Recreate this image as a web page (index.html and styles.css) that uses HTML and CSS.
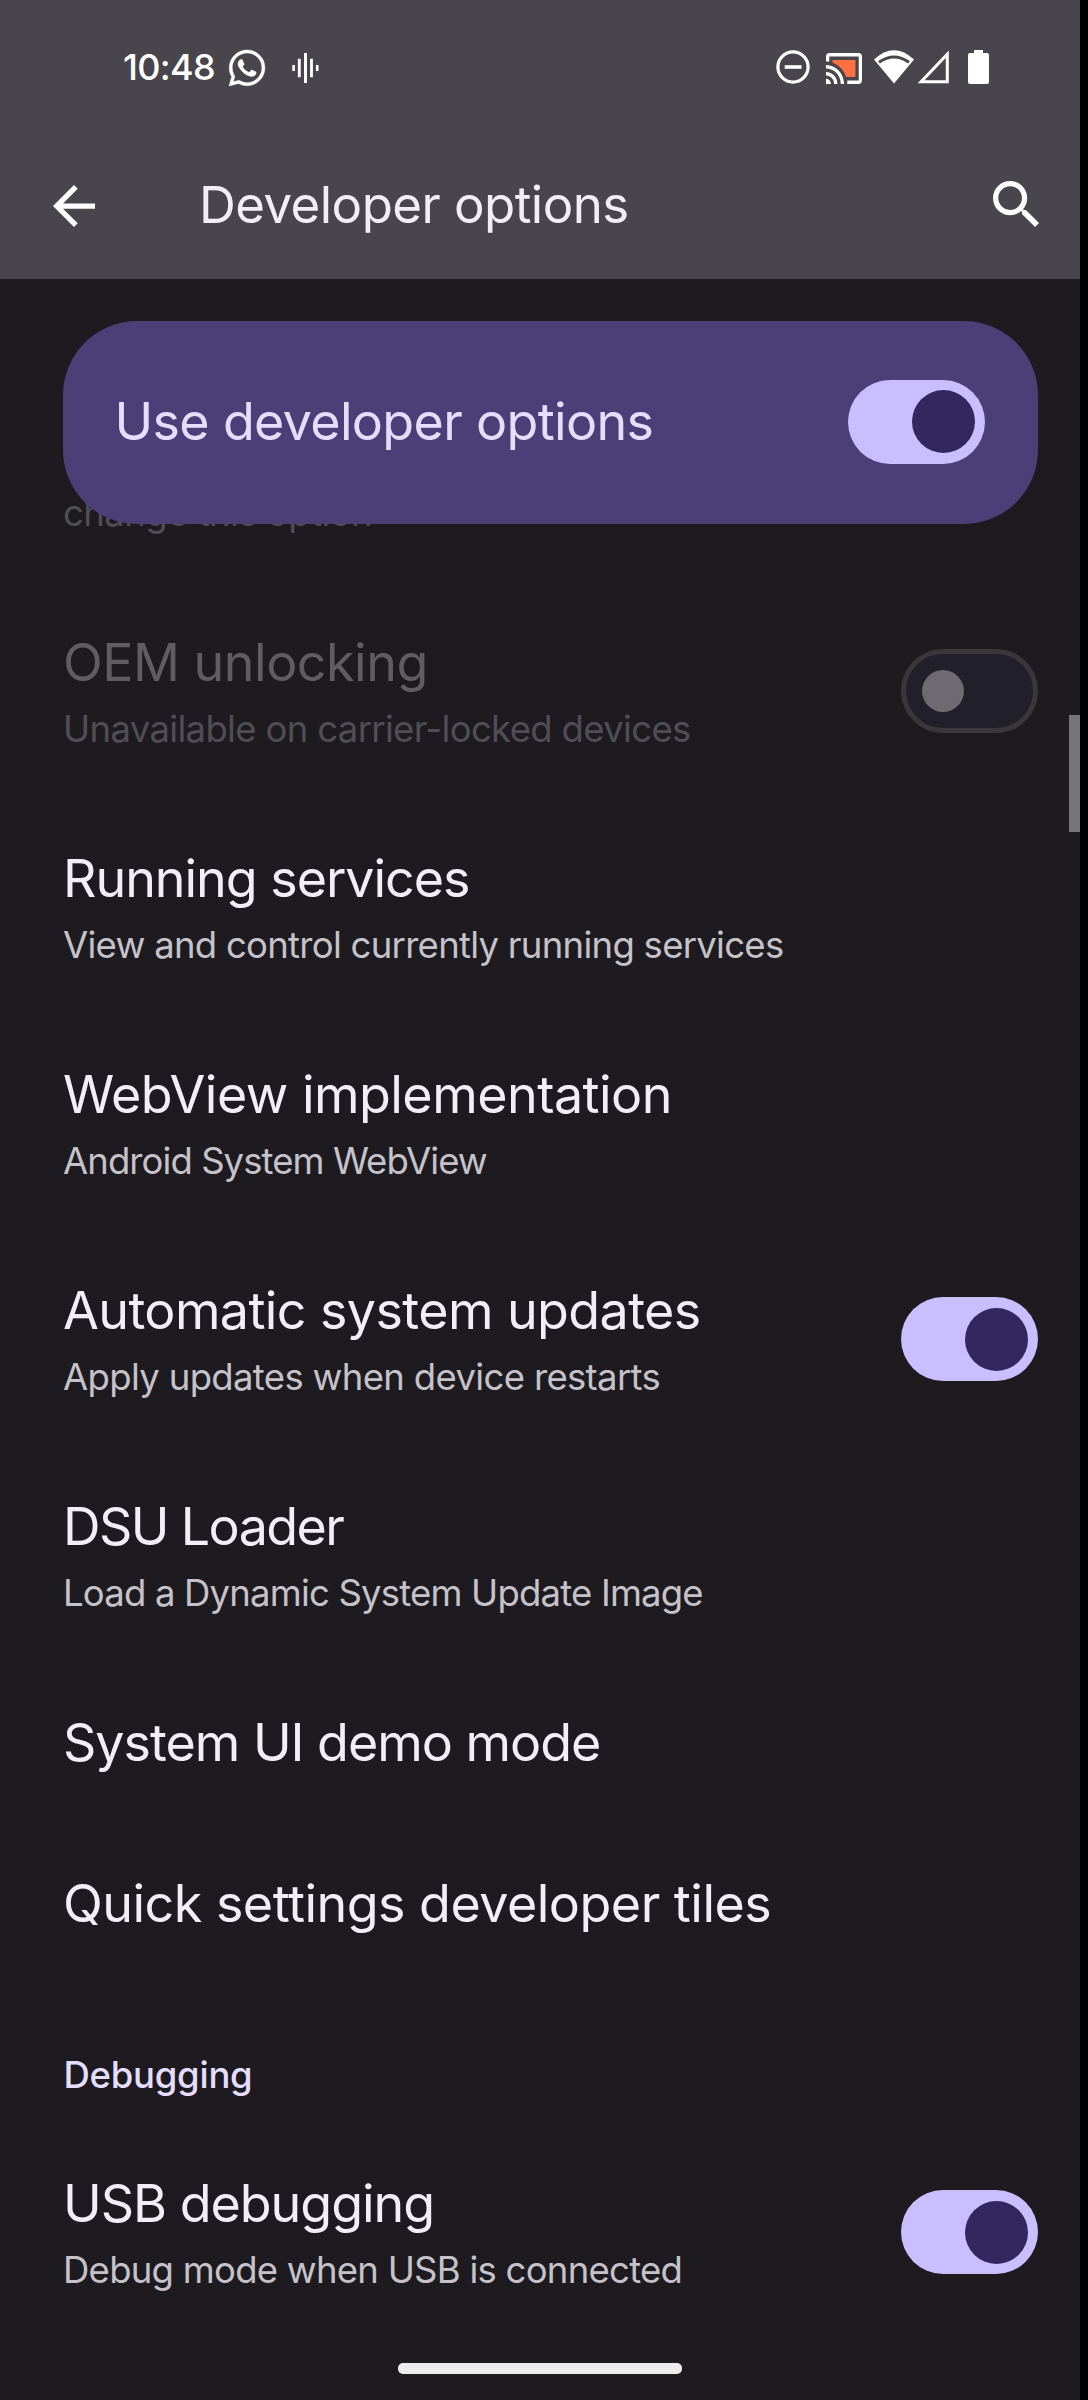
FILE: index.html
```
<!DOCTYPE html>
<html lang="en">
<head>
<meta charset="utf-8">
<title>Developer options</title>
<link rel="stylesheet" href="styles.css">
</head>
<body>
<div class="screen">
  <header class="header">
    <div class="status">
      <span class="status-time">10:48</span>
      <svg class="ico-whatsapp" width="36" height="36" viewBox="0 0 24 24"><path stroke="#fff" stroke-width=".3" d="M17.472 14.382c-.297-.149-1.758-.867-2.03-.967-.273-.099-.471-.148-.67.15-.197.297-.767.966-.94 1.164-.173.199-.347.223-.644.075-.297-.15-1.255-.463-2.39-1.475-.883-.788-1.48-1.761-1.653-2.059-.173-.297-.018-.458.13-.606.134-.133.298-.347.446-.52.149-.174.198-.298.298-.497.099-.198.05-.371-.025-.52-.075-.149-.669-1.612-.916-2.207-.242-.579-.487-.5-.669-.51-.173-.008-.371-.01-.57-.01-.198 0-.52.074-.792.372-.272.297-1.04 1.016-1.04 2.479 0 1.462 1.065 2.875 1.213 3.074.149.198 2.096 3.2 5.077 4.487.709.306 1.262.489 1.694.625.712.227 1.36.195 1.871.118.571-.085 1.758-.719 2.006-1.413.248-.694.248-1.289.173-1.413-.074-.124-.272-.198-.57-.347m-5.421 7.403h-.004a9.87 9.87 0 01-5.031-1.378l-.361-.214-3.741.982.998-3.648-.235-.374a9.86 9.86 0 01-1.51-5.26c.001-5.45 4.436-9.884 9.888-9.884 2.64 0 5.122 1.03 6.988 2.898a9.825 9.825 0 012.893 6.994c-.003 5.45-4.437 9.884-9.885 9.884m8.413-18.297A11.815 11.815 0 0012.05 0C5.495 0 .16 5.335.157 11.892c0 2.096.547 4.142 1.588 5.945L.057 24l6.305-1.654a11.882 11.882 0 005.683 1.448h.005c6.554 0 11.89-5.335 11.893-11.893a11.821 11.821 0 00-3.48-8.413Z"/></svg>
      <svg class="ico-wave" width="27" height="34" viewBox="0 0 27 34"><path d="M.3 14h2.6v6H.3zM5.9 7.8h2.8v18.4H5.9zM12 2h3v30h-3zM18.1 7.8h2.8v18.4h-2.8zM23.9 14h2.6v6h-2.6z"/></svg>
      <div class="status-right">
        <svg class="ico-dnd" width="34" height="34" viewBox="0 0 34 34"><circle cx="17" cy="17" r="15.1" fill="none" stroke="#fff" stroke-width="3.2"/><path d="M8.7 15.2h16.8v3.6H8.7z"/></svg>
        <svg class="ico-cast" width="36" height="31" viewBox="1 3 22 18" preserveAspectRatio="none"><path fill="#ff7043" d="M19 7H5v1.63c3.96 1.28 7.09 4.41 8.37 8.37H19V7z"/><path d="M1 18v3h3c0-1.66-1.34-3-3-3zm0-4v2c2.76 0 5 2.24 5 5h2c0-3.87-3.13-7-7-7zm0-4v2a9 9 0 0 1 9 9h2c0-6.08-4.93-11-11-11zm20-7H3c-1.1 0-2 .9-2 2v3h2V5h18v14h-7v2h7c1.1 0 2-.9 2-2V5c0-1.1-.9-2-2-2z"/></svg>
        <svg class="ico-wifi" width="40" height="34" viewBox="0 0 40 34"><path d="M0 9.5Q20-9 40 9.5L20 33.5z"/><path d="M5 12.3Q20 1.6 35 12.3" fill="none" stroke="#48454c" stroke-width="3"/></svg>
        <svg class="ico-signal" width="32" height="34" viewBox="0 0 32 34"><path d="M30.3 4.3V31.7H4.1z" fill="none" stroke="#fff" stroke-width="3"/></svg>
        <svg class="ico-battery" width="21" height="34" viewBox="0 0 21 34"><path d="M6 0h9v3h4a2 2 0 0 1 2 2v27a2 2 0 0 1-2 2H2a2 2 0 0 1-2-2V5a2 2 0 0 1 2-2h4z"/></svg>
      </div>
    </div>
    <div class="toolbar">
      <svg class="ico-back" width="42" height="42" viewBox="4 4 16 16"><path d="M20 11H7.83l5.59-5.59L12 4l-8 8 8 8 1.41-1.41L7.83 13H20v-2z"/></svg>
      <h1 class="toolbar-title">Developer options</h1>
      <svg class="ico-search" width="46" height="46" viewBox="3 3 17.49 17.49"><path d="M15.5 14h-.79l-.28-.27A6.471 6.471 0 0 0 16 9.5 6.5 6.5 0 1 0 9.5 16c1.61 0 3.09-.59 4.23-1.57l.27.28v.79l5 4.99L20.49 19l-4.99-5zm-6 0C7.01 14 5 11.99 5 9.5S7.01 5 9.5 5 14 7.01 14 9.5 11.99 14 9.5 14z"/></svg>
    </div>
  </header>

  <main class="list">
    <section class="row row-cut disabled">
      <div class="text"><p class="sub t-change">change this option</p></div>
    </section>
    <section class="row disabled">
      <div class="text"><h2 class="title t-oem">OEM unlocking</h2><p class="sub t-unavailable">Unavailable on carrier-locked devices</p></div>
      <span class="switch off"><span class="thumb"></span></span>
    </section>
    <section class="row">
      <div class="text"><h2 class="title t-running">Running services</h2><p class="sub t-view">View and control currently running services</p></div>
    </section>
    <section class="row">
      <div class="text"><h2 class="title t-webview">WebView implementation</h2><p class="sub t-android">Android System WebView</p></div>
    </section>
    <section class="row">
      <div class="text"><h2 class="title t-auto">Automatic system updates</h2><p class="sub t-apply">Apply updates when device restarts</p></div>
      <span class="switch"><span class="thumb"></span></span>
    </section>
    <section class="row">
      <div class="text"><h2 class="title t-dsu">DSU Loader</h2><p class="sub t-load">Load a Dynamic System Update Image</p></div>
    </section>
    <section class="row row-single">
      <div class="text"><h2 class="title t-demo">System UI demo mode</h2></div>
    </section>
    <section class="row row-single">
      <div class="text"><h2 class="title t-tiles">Quick settings developer tiles</h2></div>
    </section>
    <h3 class="category">Debugging</h3>
    <section class="row">
      <div class="text"><h2 class="title t-usb">USB debugging</h2><p class="sub t-debug">Debug mode when USB is connected</p></div>
      <span class="switch"><span class="thumb"></span></span>
    </section>
    <div class="main-switch">
      <span class="main-switch-label">Use developer options</span>
      <span class="switch"><span class="thumb"></span></span>
    </div>
    <div class="scrollbar"></div>
  </main>

  <footer class="navbar"><span class="handle"></span></footer>
</div>
</body>
</html>
```
FILE: styles.css
```
* { box-sizing: border-box; }
body { margin: 0; background: #000; font-family: Inter, Roboto, sans-serif; }
h1, h2, h3, p { margin: 0; font-weight: 400; white-space: nowrap; }
svg { display: block; flex: none; fill: #fff; overflow: visible; }

.screen {
  display: flex;
  flex-direction: column;
  width: 1080px;
  height: 2400px;
  background: #1d1b20;
  overflow: hidden;
}

/* Status bar and toolbar */
.header { height: 279px; background: #48454c; }
.status {
  display: flex;
  align-items: center;
  height: 134px;
  padding: 0 91.5px 0 123px;
  color: #fff;
}
.status-time {
  width: 106px;
  font-size: 36px;
  font-weight: 500;
  line-height: 44px;
  letter-spacing: -0.68px;
}
.ico-whatsapp { margin-top: 2px; }
.ico-wave { margin: 2px 0 0 26.5px; }
.status-right { display: flex; align-items: center; margin-left: auto; }
.ico-cast { margin: 2px 0 0 16px; }
.ico-wifi { margin-left: 11.5px; }
.ico-signal { margin-left: 3.5px; }
.ico-battery { margin-left: 18.5px; }

.toolbar {
  display: flex;
  align-items: center;
  height: 143px;
  padding: 0 41.5px 0 53px;
}
.toolbar-title {
  margin: -2px 0 0 104px;
  color: #f3edf5;
  font-size: 51px;
  line-height: 62px;
  letter-spacing: -0.54px;
}
.ico-search { margin: -4px 0 0 auto; }

/* Preference list */
.list { position: relative; height: 2061px; }
.row {
  display: flex;
  align-items: center;
  justify-content: space-between;
  height: 216px;
  padding: 0 42px 0 63px;
}
.row .text { padding-top: 3px; }
.row-cut { height: 304px; align-items: flex-end; padding-bottom: 45px; }
.row-single { height: 161.5px; }
.row-single .text { padding-top: 0; margin-top: -2px; }
.title { color: #f3edf5; font-size: 52px; line-height: 64px; }
.sub { color: #c6c2ca; font-size: 36.5px; line-height: 50px; }
.title + .sub { margin-top: 8.5px; }
.disabled .title { color: #5f5d62; }
.disabled .sub { color: #504e54; }
.category {
  height: 138px;
  padding: 64px 0 0 63.5px;
  color: #e5deff;
  font-size: 36.5px;
  font-weight: 500;
  line-height: 50px;
  letter-spacing: -0.26px;
}

/* Tracking per label */
.t-change { letter-spacing: -0.54px; }
.t-oem { letter-spacing: -0.5px; }
.t-unavailable { letter-spacing: -0.66px; }
.t-running { letter-spacing: -1.03px; }
.t-view { letter-spacing: -0.72px; }
.t-webview { letter-spacing: -0.53px; }
.t-android { letter-spacing: -0.93px; }
.t-auto { letter-spacing: -0.6px; }
.t-apply { letter-spacing: -0.66px; }
.t-dsu { letter-spacing: -1.6px; }
.t-load { letter-spacing: -0.81px; }
.t-demo { letter-spacing: -1.02px; }
.t-tiles { letter-spacing: -0.51px; }
.t-usb { letter-spacing: -1.02px; }
.t-debug { letter-spacing: -0.74px; }

/* Switches */
.switch {
  display: flex;
  flex: none;
  align-items: center;
  justify-content: flex-end;
  width: 137px;
  height: 84px;
  padding: 0 10.5px;
  border-radius: 42px;
  background: #c9bfff;
}
.thumb { width: 63px; height: 63px; border-radius: 50%; background: #32285f; }
.switch.off {
  justify-content: flex-start;
  padding: 0 15.5px;
  border: 5.25px solid #39373c;
  background: #211f29;
}
.switch.off .thumb { width: 42px; height: 42px; background: #6e6a71; }

/* Pinned card over the scrolled list */
.main-switch {
  position: absolute;
  top: 42px;
  left: 63px;
  display: flex;
  align-items: center;
  justify-content: space-between;
  width: 975px;
  height: 203px;
  padding: 0 53px 2px 51.5px;
  border-radius: 74px;
  background: #4a3f76;
}
.main-switch-label {
  color: #e5deff;
  font-size: 52px;
  line-height: 64px;
  letter-spacing: -0.67px;
}
.scrollbar {
  position: absolute;
  top: 436px;
  right: 0;
  width: 11px;
  height: 117px;
  background: #777579;
}

/* Gesture bar */
.navbar { display: flex; justify-content: center; height: 60px; padding-top: 23px; }
.handle { width: 284px; height: 11px; border-radius: 5px; background: #ededed; }
```
